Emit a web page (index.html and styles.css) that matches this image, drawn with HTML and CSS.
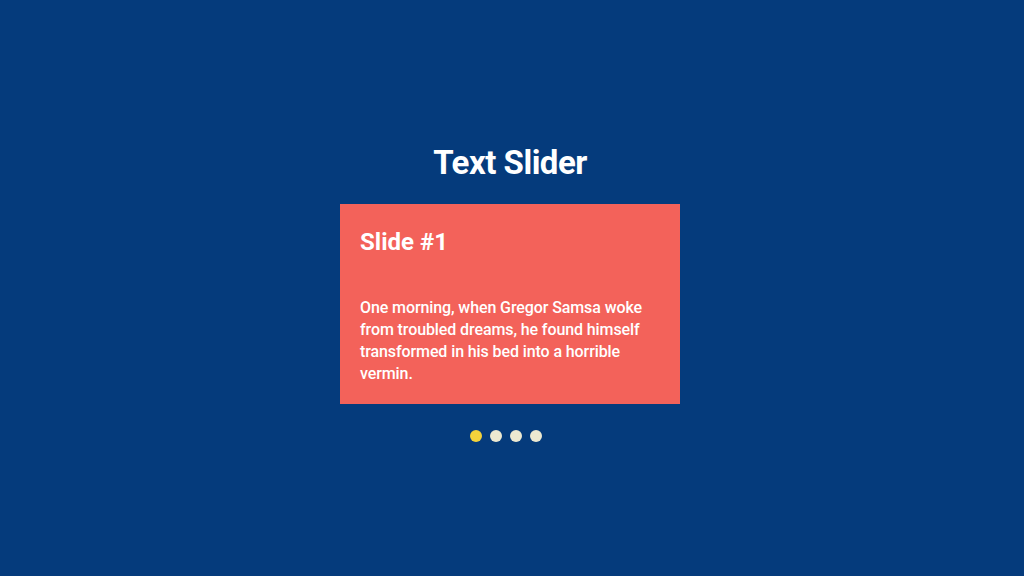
FILE: index.html
```html
<!DOCTYPE html>
<html>
<head>
<meta charset="utf-8">
<link rel="stylesheet" href="styles.css">
</head>
<body>
<main class="page">
  <h1 class="title">Text Slider</h1>
  <section class="slide">
    <h2 class="slide-title">Slide #1</h2>
    <p class="slide-text">One morning, when Gregor Samsa woke from troubled dreams, he found himself transformed in his bed into a horrible vermin.</p>
  </section>
  <nav class="dots">
    <span class="dot active"></span>
    <span class="dot"></span>
    <span class="dot"></span>
    <span class="dot"></span>
  </nav>
</main>
</body>
</html>
```
FILE: styles.css
```css
html, body {
  margin: 0;
  padding: 0;
  height: 100%;
}
body {
  background: #053b7c;
  font-family: Roboto, "Liberation Sans", sans-serif;
  color: #ffffff;
}
.page {
  width: 1020px;
  display: flex;
  flex-direction: column;
  align-items: center;
  padding-top: 143px;
}
.title {
  margin: 0;
  font-size: 33px;
  font-weight: 700;
  line-height: 40px;
  letter-spacing: -0.5px;
}
.slide {
  margin-top: 21px;
  width: 340px;
  height: 200px;
  box-sizing: border-box;
  padding: 20px;
  background: #f3625a;
}
.slide-title {
  margin: 0;
  font-size: 24px;
  font-weight: 700;
  line-height: 36px;
}
.slide-text {
  margin: 37px 0 0;
  font-size: 16px;
  font-weight: 500;
  line-height: 22px;
  letter-spacing: -0.1px;
}
.dots {
  display: flex;
  margin-top: 26px;
}
.dot {
  width: 12px;
  height: 12px;
  margin-right: 8px;
  border-radius: 50%;
  background: #ede9d1;
}
.dot.active {
  background: #f3d23b;
}
```
